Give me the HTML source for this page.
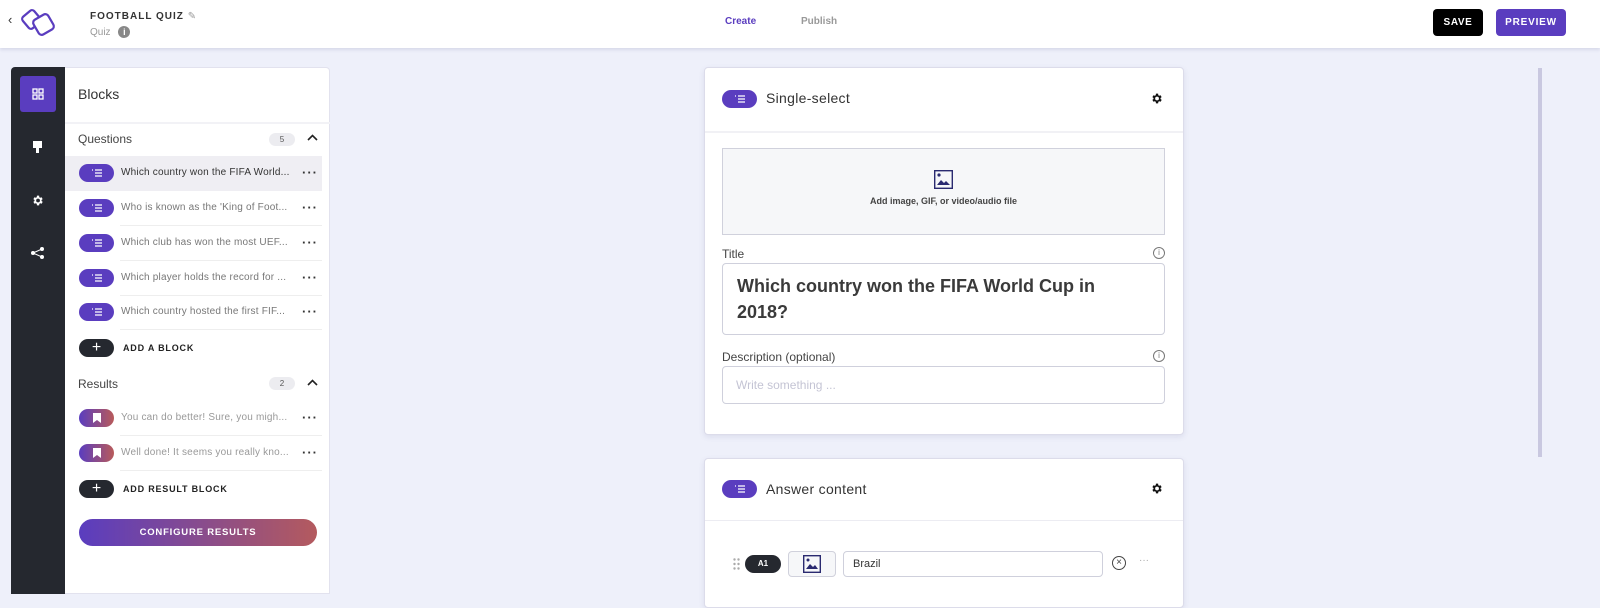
<!DOCTYPE html>
<html><head><style>
*{box-sizing:border-box;margin:0;padding:0}
body{width:1600px;height:594px;overflow:hidden;background:#eef0fa;font-family:"Liberation Sans",sans-serif;position:relative;color:#2b2d33}
.a{position:absolute}
.hdr{left:0;top:0;width:1600px;height:48px;background:#fff;box-shadow:0 2px 3px rgba(60,60,120,.12)}
.pill{position:absolute;width:35px;height:18px;border-radius:9px;background:#5a3dbf;display:flex;align-items:center;justify-content:center}
.row{position:absolute;left:65px;width:257px;height:35px}
.row .t{position:absolute;left:56px;top:11px;font-size:10px;color:#777;white-space:nowrap;letter-spacing:.2px}
.row .d{position:absolute;left:237px;top:9px;font-size:13px;color:#333;letter-spacing:1px;font-weight:bold}
.row .pill{left:14px;top:8px}
.sep{position:absolute;left:120px;width:202px;height:1px;background:#eee}
.card{background:#fff;border-radius:4px;border:1px solid #dcdcea;box-shadow:0 2px 6px rgba(80,80,140,.12)}
.lbl{font-size:12px;color:#444}
.inp{border:1px solid #cfd0dc;border-radius:4px;background:#fff}
</style></head><body>
<div class="a hdr"></div>
<div class="a" style="left:8px;top:12px;font-size:13px;color:#333">‹</div>
<svg class="a" style="left:18px;top:7px" width="44" height="32" viewBox="0 0 44 32"><rect x="6" y="5" width="15" height="15" rx="3" transform="rotate(-40 13.5 12.5)" fill="none" stroke="#5a3dbf" stroke-width="2.2"/><rect x="17" y="9" width="17" height="17" rx="3.5" transform="rotate(-30 25.5 17.5)" fill="#fff" stroke="#5a3dbf" stroke-width="2.2"/></svg>
<div class="a" style="left:90px;top:11px;font-size:10px;font-weight:bold;letter-spacing:1px;color:#333">FOOTBALL QUIZ <span style="color:#999;font-weight:normal">✎</span></div>
<div class="a" style="left:90px;top:26px;font-size:10px;color:#999">Quiz <span style="display:inline-block;width:12px;height:12px;border-radius:6px;background:#888;color:#fff;font-size:9px;text-align:center;line-height:12px;font-weight:bold;margin-left:5px">i</span></div>
<div class="a" style="left:725px;top:16px;font-size:10px;font-weight:bold;color:#5a3dbf">Create</div>
<div class="a" style="left:801px;top:16px;font-size:10px;font-weight:bold;color:#999">Publish</div>
<div class="a" style="left:1433px;top:9px;width:50px;height:27px;background:#000;border-radius:4px;color:#fff;font-size:10px;font-weight:bold;letter-spacing:.6px;text-align:center;line-height:27px">SAVE</div>
<div class="a" style="left:1496px;top:9px;width:70px;height:27px;background:#5a3dbf;border-radius:4px;color:#fff;font-size:10px;font-weight:bold;letter-spacing:.8px;text-align:center;line-height:27px">PREVIEW</div>

<div class="a" style="left:11px;top:67px;width:54px;height:527px;background:#25282f;border-radius:4px 0 0 0"></div>
<div class="a" style="left:20px;top:76px;width:36px;height:36px;background:#5a3dbf;border-radius:3px"></div>
<svg class="a" style="left:32px;top:88px" width="12" height="12"><g fill="none" stroke="#fff" stroke-width="1.3"><rect x="1" y="1" width="4" height="4"/><rect x="7" y="1" width="4" height="4"/><rect x="1" y="7" width="4" height="4"/><rect x="7" y="7" width="4" height="4"/></g></svg>
<svg class="a" style="left:33px;top:141px" width="10" height="13"><rect x="0" y="0" width="9" height="7" fill="#fff"/><rect x="3" y="7" width="3" height="5" fill="#fff"/></svg>
<svg class="a" style="left:31px;top:194px" width="13" height="13" viewBox="0 0 24 24"><path fill="#fff" d="M19.4 13a7.5 7.5 0 000-2l2.1-1.6-2-3.5-2.5 1a7.6 7.6 0 00-1.7-1L15 3h-4l-.4 2.9a7.6 7.6 0 00-1.7 1l-2.5-1-2 3.5L6.5 11a7.5 7.5 0 000 2l-2.1 1.6 2 3.5 2.5-1c.5.4 1.1.8 1.7 1L11 21h4l.4-2.9c.6-.2 1.2-.6 1.7-1l2.5 1 2-3.5zM13 15.5a3.5 3.5 0 110-7 3.5 3.5 0 010 7z"/></svg>
<svg class="a" style="left:31px;top:247px" width="13" height="12"><g fill="#fff" stroke="#fff"><circle cx="2" cy="6" r="1.5"/><circle cx="11" cy="2" r="1.5"/><circle cx="11" cy="10" r="1.5"/><path d="M2 6L11 2M2 6L11 10" fill="none"/></g></svg>

<div class="a" style="left:65px;top:67px;width:265px;height:527px;background:#fff;border-radius:0 4px 0 0;border:1px solid #e2e2ee;border-left:none"></div>
<div class="a" style="left:78px;top:86px;font-size:14px;color:#333">Blocks</div>
<div class="a" style="left:65px;top:122px;width:265px;height:2px;background:#f2f2f6"></div>
<div class="a" style="left:78px;top:132px;font-size:12px;color:#444">Questions</div>
<div class="a" style="left:269px;top:133px;width:26px;height:13px;border-radius:7px;background:#ececf0;font-size:8px;text-align:center;line-height:13px;color:#555">5</div>
<svg class="a" style="left:307px;top:134px" width="11" height="8"><path d="M1 6l4.5-4.5L10 6" fill="none" stroke="#222" stroke-width="1.6"/></svg>

<div class="row" style="top:156px;background:#efeef3"><div class="pill"><svg width="12" height="8"><g stroke="#fff" stroke-width="1.2"><path d="M4 1h7M4 4h7M4 7h7"/><path d="M1 1h1"/></g></svg></div><div class="t" style="color:#333">Which country won the FIFA World...</div><div class="d">···</div></div>
<div class="row" style="top:191px"><div class="pill"><svg width="12" height="8"><g stroke="#fff" stroke-width="1.2"><path d="M4 1h7M4 4h7M4 7h7M1 1h1"/></g></svg></div><div class="t">Who is known as the 'King of Foot...</div><div class="d">···</div></div>
<div class="sep" style="top:225px"></div>
<div class="row" style="top:226px"><div class="pill"><svg width="12" height="8"><g stroke="#fff" stroke-width="1.2"><path d="M4 1h7M4 4h7M4 7h7M1 1h1"/></g></svg></div><div class="t">Which club has won the most UEF...</div><div class="d">···</div></div>
<div class="sep" style="top:260px"></div>
<div class="row" style="top:261px"><div class="pill"><svg width="12" height="8"><g stroke="#fff" stroke-width="1.2"><path d="M4 1h7M4 4h7M4 7h7M1 1h1"/></g></svg></div><div class="t">Which player holds the record for ...</div><div class="d">···</div></div>
<div class="sep" style="top:295px"></div>
<div class="row" style="top:295px"><div class="pill"><svg width="12" height="8"><g stroke="#fff" stroke-width="1.2"><path d="M4 1h7M4 4h7M4 7h7M1 1h1"/></g></svg></div><div class="t">Which country hosted the first FIF...</div><div class="d">···</div></div>
<div class="sep" style="top:329px"></div>
<div class="pill" style="left:79px;top:339px;background:#25282f;color:#fff;font-size:16px;line-height:18px">+</div>
<div class="a" style="left:123px;top:343px;font-size:9px;font-weight:bold;letter-spacing:.8px;color:#222">ADD A BLOCK</div>

<div class="a" style="left:78px;top:377px;font-size:12px;color:#444">Results</div>
<div class="a" style="left:269px;top:377px;width:26px;height:13px;border-radius:7px;background:#ececf0;font-size:8px;text-align:center;line-height:13px;color:#555">2</div>
<svg class="a" style="left:307px;top:379px" width="11" height="8"><path d="M1 6l4.5-4.5L10 6" fill="none" stroke="#222" stroke-width="1.6"/></svg>
<div class="row" style="top:401px"><div class="pill" style="background:linear-gradient(90deg,#5a3dbf,#b85a5a)"><svg width="8" height="10"><path d="M0 0h8v10L4 7 0 10z" fill="#fff"/></svg></div><div class="t" style="color:#999">You can do better! Sure, you migh...</div><div class="d">···</div></div>
<div class="sep" style="top:435px"></div>
<div class="row" style="top:436px"><div class="pill" style="background:linear-gradient(90deg,#5a3dbf,#b85a5a)"><svg width="8" height="10"><path d="M0 0h8v10L4 7 0 10z" fill="#fff"/></svg></div><div class="t" style="color:#999">Well done! It seems you really kno...</div><div class="d">···</div></div>
<div class="sep" style="top:470px"></div>
<div class="pill" style="left:79px;top:480px;background:#25282f;color:#fff;font-size:16px;line-height:18px">+</div>
<div class="a" style="left:123px;top:484px;font-size:9px;font-weight:bold;letter-spacing:.8px;color:#222">ADD RESULT BLOCK</div>
<div class="a" style="left:79px;top:519px;width:238px;height:27px;border-radius:14px;background:linear-gradient(90deg,#5a3dbf,#b45a5e);color:#fff;font-size:9.5px;font-weight:bold;letter-spacing:.8px;text-align:center;line-height:27px">CONFIGURE RESULTS</div>

<div class="a" style="left:1538px;top:68px;width:4px;height:389px;background:#c9c8e0"></div>

<div class="a card" style="left:704px;top:67px;width:480px;height:368px"></div>
<div class="pill" style="left:722px;top:90px"><svg width="12" height="8"><g stroke="#fff" stroke-width="1.2"><path d="M4 1h7M4 4h7M4 7h7M1 1h1"/></g></svg></div>
<div class="a" style="left:766px;top:90px;font-size:14px;color:#333;letter-spacing:.3px">Single-select</div>
<svg class="a" style="left:1150px;top:92px" width="13" height="13" viewBox="0 0 24 24"><path fill="#111" d="M19.4 13a7.5 7.5 0 000-2l2.1-1.6-2-3.5-2.5 1a7.6 7.6 0 00-1.7-1L15 3h-4l-.4 2.9a7.6 7.6 0 00-1.7 1l-2.5-1-2 3.5L6.5 11a7.5 7.5 0 000 2l-2.1 1.6 2 3.5 2.5-1c.5.4 1.1.8 1.7 1L11 21h4l.4-2.9c.6-.2 1.2-.6 1.700-1l2.5 1 2-3.5zM13 15.5a3.5 3.5 0 110-7 3.5 3.5 0 010 7z"/></svg>
<div class="a" style="left:705px;top:131px;width:478px;height:2px;background:#f1f1f5"></div>
<div class="a" style="left:722px;top:148px;width:443px;height:87px;background:#f6f7f9;border:1px solid #d0d1dc"></div>
<svg class="a" style="left:934px;top:170px" width="19" height="19"><rect x=".7" y=".7" width="17.6" height="17.6" fill="none" stroke="#2a2a70" stroke-width="1.4"/><circle cx="5" cy="5" r="1.6" fill="#2a2a70"/><path d="M3 15l4-5 3 3 2-2 4 4z" fill="#2a2a70"/></svg>
<div class="a" style="left:722px;top:196px;width:443px;text-align:center;font-size:9px;font-weight:bold;color:#444">Add image, GIF, or video/audio file</div>
<div class="a lbl" style="left:722px;top:247px">Title</div>
<div class="a" style="left:1153px;top:247px;width:12px;height:12px;border:1px solid #777;border-radius:6px;font-size:8px;text-align:center;line-height:10px;color:#777">i</div>
<div class="a inp" style="left:722px;top:263px;width:443px;height:72px;padding:9px 14px;font-size:18px;font-weight:bold;color:#3a3a3a;line-height:26px">Which country won the FIFA World Cup in 2018?</div>
<div class="a lbl" style="left:722px;top:350px">Description (optional)</div>
<div class="a" style="left:1153px;top:350px;width:12px;height:12px;border:1px solid #777;border-radius:6px;font-size:8px;text-align:center;line-height:10px;color:#777">i</div>
<div class="a inp" style="left:722px;top:366px;width:443px;height:38px;padding:11px 13px;font-size:12px;color:#c4c4d4">Write something ...</div>

<div class="a card" style="left:704px;top:458px;width:480px;height:150px"></div>
<div class="pill" style="left:722px;top:480px"><svg width="12" height="8"><g stroke="#fff" stroke-width="1.2"><path d="M4 1h7M4 4h7M4 7h7M1 1h1"/></g></svg></div>
<div class="a" style="left:766px;top:481px;font-size:14px;color:#333;letter-spacing:.3px">Answer content</div>
<svg class="a" style="left:1150px;top:482px" width="13" height="13" viewBox="0 0 24 24"><path fill="#111" d="M19.4 13a7.5 7.5 0 000-2l2.1-1.6-2-3.5-2.5 1a7.6 7.6 0 00-1.7-1L15 3h-4l-.4 2.9a7.6 7.6 0 00-1.7 1l-2.5-1-2 3.5L6.5 11a7.5 7.5 0 000 2l-2.1 1.6 2 3.5 2.5-1c.5.4 1.1.8 1.7 1L11 21h4l.4-2.9c.6-.2 1.2-.6 1.7-1l2.5 1 2-3.5zM13 15.5a3.5 3.5 0 110-7 3.5 3.5 0 010 7z"/></svg>
<div class="a" style="left:705px;top:520px;width:478px;height:1px;background:#ececf2"></div>
<svg class="a" style="left:733px;top:558px" width="7" height="12"><g fill="#aaa"><circle cx="1.5" cy="1.5" r="1.2"/><circle cx="5.5" cy="1.5" r="1.2"/><circle cx="1.5" cy="6" r="1.2"/><circle cx="5.5" cy="6" r="1.2"/><circle cx="1.5" cy="10.5" r="1.2"/><circle cx="5.5" cy="10.5" r="1.2"/></g></svg>
<div class="a" style="left:745px;top:555px;width:36px;height:18px;border-radius:9px;background:#25282f;color:#fff;font-size:8px;font-weight:bold;text-align:center;line-height:18px">A1</div>
<div class="a" style="left:788px;top:551px;width:48px;height:26px;border:1px solid #d0d1dc;border-radius:4px;background:#f6f7f9"></div>
<svg class="a" style="left:803px;top:555px" width="18" height="18"><rect x=".7" y=".7" width="16.6" height="16.6" fill="none" stroke="#2a2a70" stroke-width="1.4"/><circle cx="5" cy="5" r="1.5" fill="#2a2a70"/><path d="M3 14l4-5 3 3 2-2 3 4z" fill="#2a2a70"/></svg>
<div class="a inp" style="left:843px;top:551px;width:260px;height:26px;padding:6px 9px;font-size:11px;color:#333">Brazil</div>
<div class="a" style="left:1112px;top:556px;width:14px;height:14px;border:1.2px solid #444;border-radius:7px;font-size:10px;text-align:center;line-height:12px;color:#444">×</div>
<div class="a" style="left:1139px;top:555px;font-size:10px;color:#aaa">···</div>
</body></html>
